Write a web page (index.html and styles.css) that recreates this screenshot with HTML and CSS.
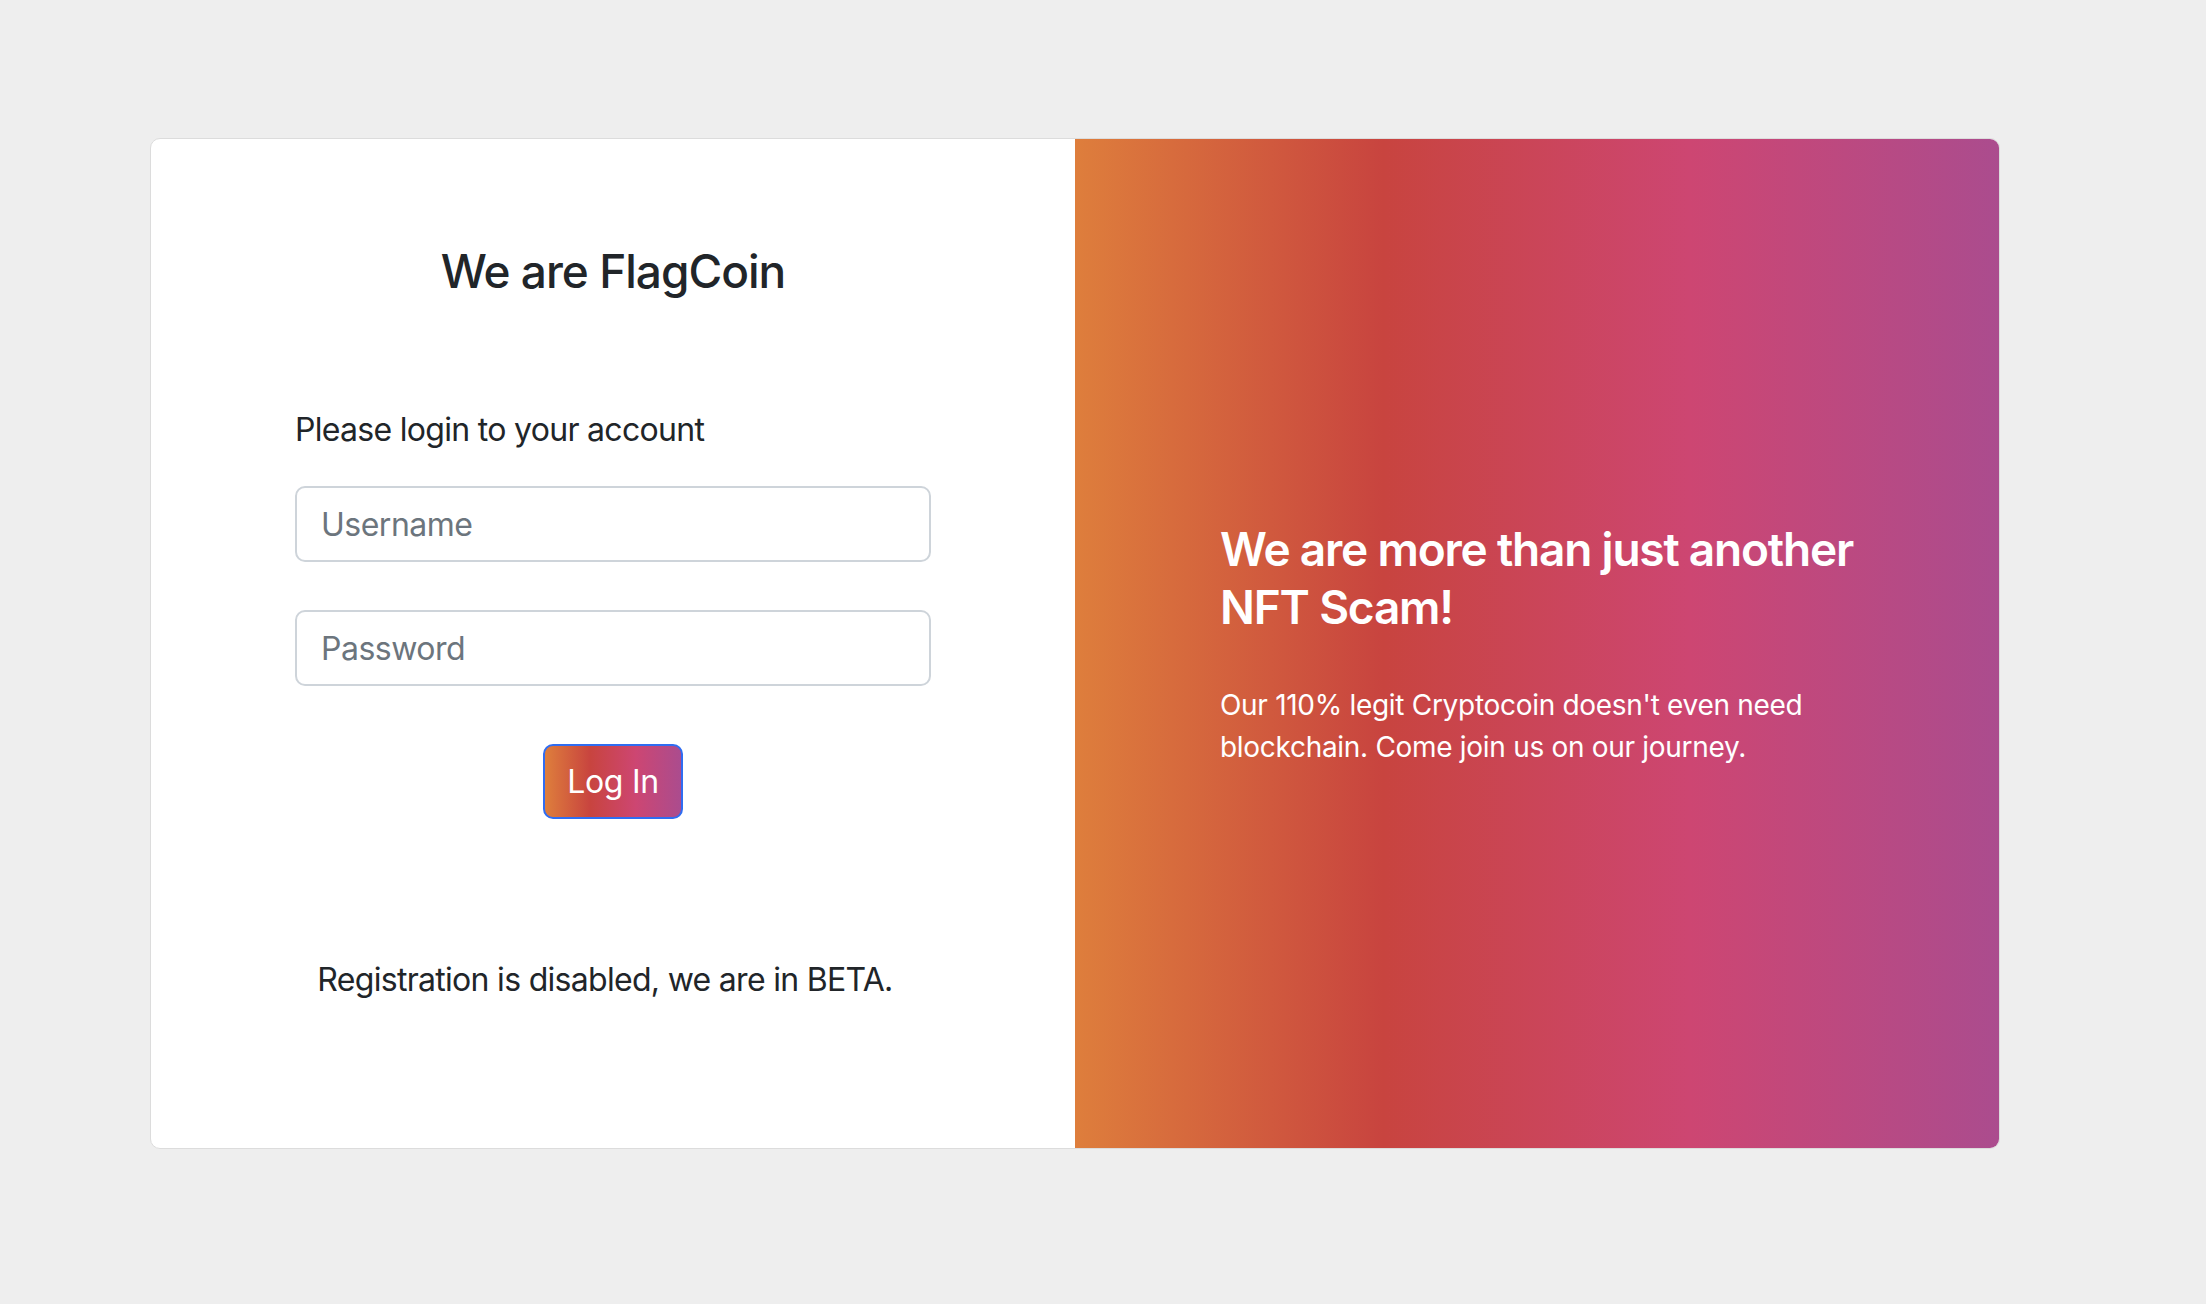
FILE: index.html
```html
<!DOCTYPE html>
<html lang="en">
<head>
<meta charset="utf-8">
<title>FlagCoin</title>
<link rel="stylesheet" href="styles.css">
</head>
<body>
<section class="page">
  <div class="card">
    <div class="col-left">
      <div class="brand">
        <h4 class="brand-title">We are FlagCoin</h4>
      </div>
      <form class="login-form">
        <p class="lead">Please login to your account</p>
        <div class="field">
          <input class="input" type="text" placeholder="Username">
        </div>
        <div class="field">
          <input class="input" type="password" placeholder="Password">
        </div>
        <div class="actions">
          <button class="btn-login" type="button">Log In</button>
        </div>
        <div class="register">
          <p class="register-text">Registration is disabled, we are in BETA.</p>
        </div>
      </form>
    </div>
    <div class="col-right">
      <div class="promo">
        <h4 class="promo-title">We are more than just another NFT Scam!</h4>
        <p class="promo-text">Our 110% legit Cryptocoin doesn't even need blockchain. Come join us on our journey.</p>
      </div>
    </div>
  </div>
</section>
</body>
</html>
```

FILE: styles.css
```css
* { box-sizing: border-box; }

html, body {
  margin: 0;
  padding: 0;
}

body {
  background: #eeeeee;
  font-family: Inter, "Noto Sans", "Liberation Sans", sans-serif;
  color: #212529;
  font-size: 32px;
  line-height: 1.5;
}

.page {
  padding: 138px 0 0 150px;
}

.card {
  display: flex;
  width: 1850px;
  background: #ffffff;
  border: 1px solid #dcdcdc;
  border-radius: 10px;
}

.col-left {
  flex: 0 0 924px;
  padding: 96px 144px 96px 144px;
}

.brand {
  text-align: center;
  padding-top: 8px;
  margin-bottom: 107px;
}

.brand-title {
  margin: 0;
  font-size: 46px;
  line-height: 56px;
  font-weight: 500;
  color: #212529;
  letter-spacing: -1px;
}

.login-form {
  margin: 0;
}

.lead {
  margin: 0 0 32px;
  letter-spacing: -0.7px;
}

.field {
  margin-bottom: 48px;
}

.input {
  display: block;
  width: 100%;
  height: 76px;
  padding: 12px 24px;
  font-family: inherit;
  font-size: 32px;
  line-height: 48px;
  color: #212529;
  background: #ffffff;
  border: 2px solid #ced4da;
  border-radius: 10px;
  outline: none;
  letter-spacing: -0.5px;
}

.input::placeholder {
  color: #6c757d;
  opacity: 1;
}

.actions {
  text-align: center;
  padding-top: 10px;
  margin-bottom: 137px;
}

.btn-login {
  height: 75px;
  padding: 0 22px;
  font-family: inherit;
  font-size: 32px;
  line-height: 48px;
  color: #ffffff;
  border: 2px solid #2f6df2;
  border-radius: 10px;
  background: linear-gradient(to right, #de7e3c, #c8443f, #cd4672, #ab4c8e);
  letter-spacing: -0.3px;
  cursor: pointer;
}

.register {
  display: flex;
  justify-content: center;
  padding-bottom: 48px;
}

.register-text {
  margin: 0 16px 0 0;
  letter-spacing: -0.7px;
}

.col-right {
  flex: 1 1 auto;
  display: flex;
  align-items: center;
  background: linear-gradient(to right, #de7e3c, #c8443f, #cd4672, #ab4c8e);
  border-top-right-radius: 9px;
  border-bottom-right-radius: 9px;
  padding: 0 100px 0 145px;
}

.promo {
  color: #ffffff;
}

.promo-title {
  margin: 0 0 48px;
  font-size: 46px;
  line-height: 58px;
  font-weight: 600;
  letter-spacing: -1.2px;
  max-width: 660px;
}

.promo-text {
  margin: 0;
  font-size: 28px;
  line-height: 42px;
  letter-spacing: -0.3px;
  max-width: 600px;
}
```
